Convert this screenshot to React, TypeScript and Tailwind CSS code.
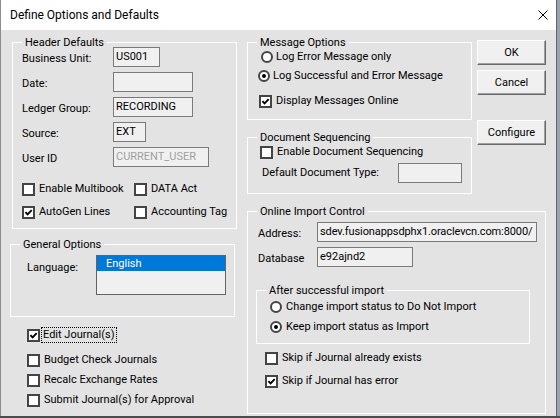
import type { ReactNode } from "react";

// Classic Win32-style options dialog for the journal import settings.

const Check = ({ checked = false }: { checked?: boolean }) => (
  <span className="flex h-[13px] w-[13px] shrink-0 items-center justify-center border-2 border-[#444] bg-white">
    {checked && (
      <svg width="9" height="9" viewBox="0 0 9 9" className="block">
        <path d="M1.4 4.1 L3.6 6.4 L7.7 2.1" fill="none" stroke="#000" strokeWidth="1.9" />
      </svg>
    )}
  </span>
);

const Radio = ({ on = false }: { on?: boolean }) => (
  <span className="flex h-3 w-3 shrink-0 items-center justify-center rounded-full border-2 border-[#444] bg-white">
    {on && <span className="h-1 w-1 rounded-full bg-black" />}
  </span>
);

type RowProps = { label: ReactNode; className?: string };

const CheckRow = ({ label, className = "", checked }: RowProps & { checked?: boolean }) => (
  <div className={"flex h-[16px] items-center gap-[4px] " + className}>
    <Check checked={checked} />
    <span>{label}</span>
  </div>
);

const RadioRow = ({ label, className = "", on }: RowProps & { on?: boolean }) => (
  <div className={"flex h-[16px] items-center gap-[3px] " + className}>
    <Radio on={on} />
    <span>{label}</span>
  </div>
);

const GroupBox = ({
  title,
  className = "",
  children,
}: {
  title: string;
  className?: string;
  children: ReactNode;
}) => (
  <fieldset className={"border border-white " + className}>
    <legend className="ml-[9px] px-[3px] leading-[11px]">{title}</legend>
    {children}
  </fieldset>
);

const Field = ({ value = "", className = "" }: { value?: string; className?: string }) => (
  <div
    className={
      "flex h-[20px] items-center overflow-hidden border border-[#7a7a7a] bg-[#f0f0f0] pl-[2px] " +
      className
    }
  >
    {value}
  </div>
);

const Button = ({ label, className = "" }: { label: string; className?: string }) => (
  <div
    className={
      "flex h-[25px] w-[69px] items-center justify-center border border-t-white border-l-white border-r-[#696969] border-b-[#696969] bg-[#f0f0f0] shadow-[inset_-1px_-1px_0_#a0a0a0] " +
      className
    }
  >
    {label}
  </div>
);

const headerFields = [
  { label: "Business Unit:", value: "US001", w: "w-[47px]" },
  { label: "Date:", value: "", w: "w-[80px]" },
  { label: "Ledger Group:", value: "RECORDING", w: "w-[80px]" },
  { label: "Source:", value: "EXT", w: "w-[33px]" },
  { label: "User ID", value: "CURRENT_USER", w: "w-[96px] text-[#a0a0a0]" },
];

export default function App() {
  return (
    <div className="flex h-[418px] w-[560px] flex-col overflow-hidden whitespace-nowrap bg-[#98a3ae] font-['Roboto','Liberation_Sans',sans-serif] text-[11px] leading-[16px] text-black">
      <div className="flex h-[416px]">
        <div className="flex w-[557px] flex-col border-l border-r border-l-[#8c8c8c] border-r-[#5b6670] bg-[#e3e3e3]">
          {/* title bar */}
          <div className="flex h-[30px] shrink-0 items-center justify-between bg-white pl-[9px] pr-[8px]">
            <span className="text-[12px]">Define Options and Defaults</span>
            <svg width="10" height="10" viewBox="0 0 10 10" className="block">
              <path d="M0.5 0.5 L9.5 9.5 M9.5 0.5 L0.5 9.5" stroke="#000" strokeWidth="1" />
            </svg>
          </div>

          <div className="flex flex-1 pl-[9px] pt-[7px]">
            {/* left column */}
            <div className="flex w-[227px] flex-col">
              <GroupBox title="Header Defaults" className="ml-[2px] h-[192px] w-[225px]">
                <div className="-mt-[1px] pl-[9px]">
                  <div className="flex flex-col gap-[5px]">
                    {headerFields.map((f) => (
                      <div key={f.label} className="flex h-[20px] items-start">
                        <span className="w-[91px] pt-[4px]">{f.label}</span>
                        <Field value={f.value} className={f.w} />
                      </div>
                    ))}
                  </div>
                  <div className="mt-[14px] flex">
                    <CheckRow label="Enable Multibook" className="w-[112px]" />
                    <CheckRow label="DATA Act" />
                  </div>
                  <div className="mt-[7px] flex">
                    <CheckRow label="AutoGen Lines" checked className="w-[112px]" />
                    <CheckRow label="Accounting Tag" />
                  </div>
                </div>
              </GroupBox>

              <GroupBox title="General Options" className="mt-[10px] h-[78px] w-[225px]">
                <div className="flex pl-[16px] pt-[5px]">
                  <span className="mt-[5px] w-[69px]">Language:</span>
                  <div className="h-[40px] w-[130px] border border-[#646464] bg-[#f0f0f0]">
                    <div className="h-[15px] bg-[#0078d7] pl-[9px] leading-[15px] text-white">English</div>
                  </div>
                </div>
              </GroupBox>

              <div className="mt-[10px] flex flex-col pl-[17px]">
                <div className="flex h-[16px] items-center gap-[1px]">
                  <Check checked />
                  <span className="border border-dotted border-black px-[1px] leading-[14px]">Edit Journal(s)</span>
                </div>
                <CheckRow label="Budget Check Journals" className="mt-[9px] gap-[3px]" />
                <CheckRow label="Recalc Exchange Rates" className="mt-[4px] gap-[3px]" />
                <CheckRow label="Submit Journal(s) for Approval" className="mt-[4px] gap-[3px]" />
              </div>
            </div>

            {/* right side */}
            <div className="ml-[10px] flex w-[299px] flex-col">
              <div className="flex">
                <div className="flex w-[225px] flex-col">
                  <GroupBox title="Message Options" className="h-[83px] w-[225px]">
                    <RadioRow label="Log Error Message only" className="mt-[1px] pl-[13px]" />
                    <RadioRow label="Log Successful and Error Message" on className="mt-[3px] pl-[10px]" />
                    <CheckRow label="Display Messages Online" checked className="mt-[9px] pl-[11px]" />
                  </GroupBox>

                  <GroupBox title="Document Sequencing" className="mt-[12px] h-[62px] w-[225px]">
                    <CheckRow label="Enable Document Sequencing" className="mt-[1px] pl-[12px]" />
                    <div className="mt-[3px] flex h-[20px] items-center pl-[14px]">
                      <span className="w-[136px]">Default Document Type:</span>
                      <Field className="w-[64px]" />
                    </div>
                  </GroupBox>
                </div>

                <div className="ml-[5px] mt-[3px] flex flex-col">
                  <Button label="OK" />
                  <Button label="Cancel" className="mt-[5px]" />
                  <Button label="Configure" className="mt-[25px]" />
                </div>
              </div>

              <GroupBox title="Online Import Control" className="mt-[12px] h-[208px] w-[299px]">
                <div className="mt-[5px] flex h-[20px] items-start pl-[10px]">
                  <span className="w-[59px] pt-[4px]">Address:</span>
                  <Field
                    value="sdev.fusionappsdphx1.oraclevcn.com:8000/"
                    className="w-[220px] tracking-[-0.1px]"
                  />
                </div>
                <div className="mt-[5px] flex h-[20px] items-start pl-[10px]">
                  <span className="w-[59px] pt-[4px]">Database</span>
                  <Field value="e92ajnd2" className="w-[96px]" />
                </div>

                <GroupBox title="After successful import" className="ml-[8px] mt-[18px] h-[59px] w-[274px]">
                  <RadioRow label="Change import status to Do Not Import" className="mt-[3px] gap-[4px] pl-[13px]" />
                  <RadioRow label="Keep import status as Import" on className="mt-[4px] gap-[4px] pl-[13px]" />
                </GroupBox>

                <CheckRow label="Skip if Journal already exists" className="mt-[6px] pl-[17px]" />
                <CheckRow label="Skip if Journal has error" checked className="mt-[7px] pl-[17px]" />
              </GroupBox>
            </div>
          </div>
        </div>
      </div>
      <div className="h-[2px] shrink-0 bg-[#4d4d4d]" />
    </div>
  );
}
